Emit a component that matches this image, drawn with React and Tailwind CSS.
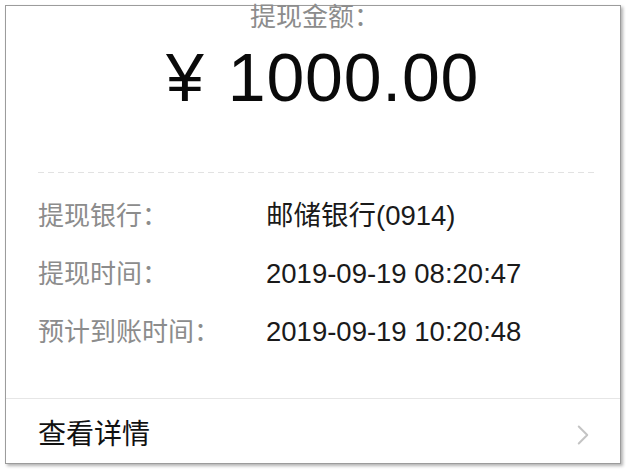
import { ChevronRight } from "lucide-react";

const rows = [
  { label: "提现银行：", value: "邮储银行(0914)" },
  { label: "提现时间：", value: "2019-09-19 08:20:47" },
  { label: "预计到账时间：", value: "2019-09-19 10:20:48" },
];

const font = "font-['Liberation_Sans','Noto_Sans_CJK_SC',sans-serif]";

export default function App() {
  return (
    <div className={`w-[628px] h-[471px] bg-white pt-[5px] pl-[5px] ${font}`}>
      <div className="w-[616px] h-[459px] border border-[#9c9c9c] bg-white shadow-[2px_2px_3px_rgba(0,0,0,0.3)] flex flex-col">
        {/* 金额 */}
        <div className="text-center text-[26px] leading-[24px] text-[#8c8c8c] -mt-px pl-[4px]">提现金额：</div>
        <div className="mt-[13px] flex items-center pl-[160px] text-[68px] leading-[70px] text-[#0a0a0a]">
          <span>¥</span>
          <span className="ml-[24px] tracking-[0.8px]">1000.00</span>
        </div>

        <div className="mt-[60px] ml-[32px] mr-[26px] h-px bg-[repeating-linear-gradient(to_right,#e2e2e2_0_6px,transparent_6px_10px)]" />

        {/* 明细 */}
        <div className="mt-[14px] flex flex-col">
          {rows.map((r) => (
            <div key={r.label} className="h-[58px] flex items-center pl-[32px]">
              <div className="w-[228px] text-[26px] text-[#8c8c8c]">{r.label}</div>
              <div className="text-[27.5px] text-[#1a1a1a]">{r.value}</div>
            </div>
          ))}
        </div>

        <div className="mt-[37px] h-px bg-[#e6e6e6]" />

        {/* 查看详情 */}
        <div className="flex-1 flex items-center justify-between pl-[32px] pr-[20px] pt-2">
          <span className="text-[28px] text-[#111]">查看详情</span>
          <ChevronRight size={34} strokeWidth={1.4} className="text-[#c4c4c4]" />
        </div>
      </div>
    </div>
  );
}
